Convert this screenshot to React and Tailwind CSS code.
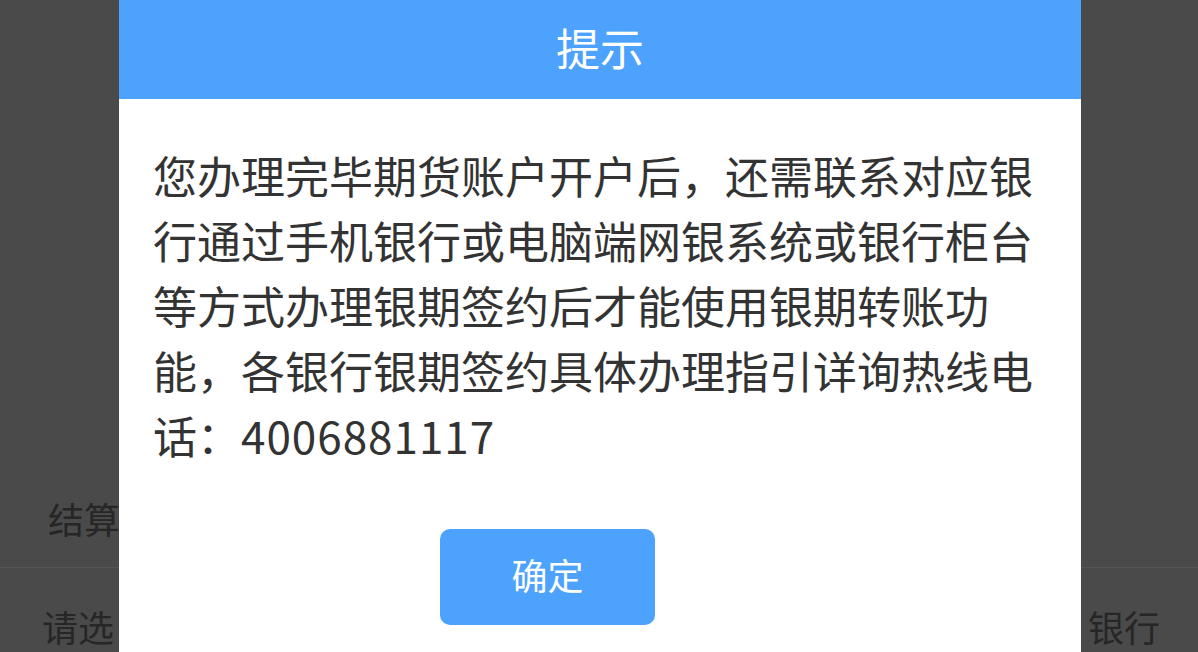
import React from "react";

const lines = [
  "您办理完毕期货账户开户后，还需联系对应银",
  "行通过手机银行或电脑端网银系统或银行柜台",
  "等方式办理银期签约后才能使用银期转账功",
  "能，各银行银期签约具体办理指引详询热线电",
];

const App = () => {
  return (
    <div
      className="relative w-[1198px] h-[652px] overflow-hidden bg-[#4a4a4a]"
      style={{ fontFamily: '"Noto Sans CJK SC", "Noto Sans", sans-serif' }}
    >
      {/* page behind the mask */}
      <div className="pt-[490px] text-[36px] text-[#262626]">
        <div className="h-[78px] pl-[48px] leading-[56px] border-b border-[#555555]">
          结算
        </div>
        <div className="flex justify-between pl-[42px] pr-[38px] pt-[30px] leading-[56px]">
          <span>请选</span>
          <span>银行</span>
        </div>
      </div>

      {/* dialog */}
      <div className="absolute left-[119px] top-0 w-[962px] h-[652px] bg-white">
        <div className="h-[99px] bg-[#4ca2fc] flex items-center justify-center text-white text-[44px] leading-none pb-[6px]">
          提示
        </div>
        <div className="px-[34px] pt-[44px] text-[44px] leading-[65px] text-[#333333]">
          {lines.map((l) => (
            <div key={l} className="whitespace-nowrap">
              {l}
            </div>
          ))}
          <div className="whitespace-nowrap">
            话：<span className="tracking-[1px]">4006881117</span>
          </div>
        </div>
        <div className="pt-[61px] pl-[321px]">
          <button className="w-[215px] h-[96px] rounded-[10px] bg-[#4ca2fc] text-white text-[36px] leading-none pb-[6px]">
            确定
          </button>
        </div>
      </div>
    </div>
  );
};

export default App;
